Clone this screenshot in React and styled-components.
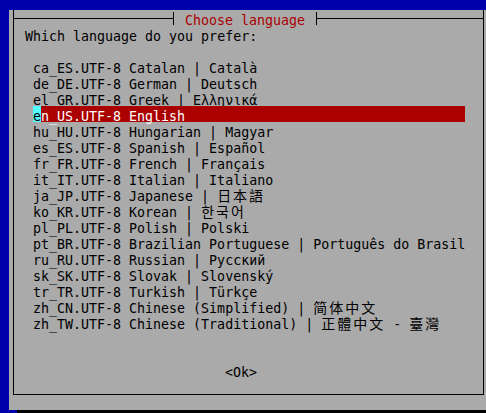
import React from "react";
import styled, { createGlobalStyle } from "styled-components";

const GlobalStyle = createGlobalStyle`
    html, body {
        margin: 0;
        padding: 0;
        background: #0000aa;
        overflow: hidden;
    }
`;

const Screen = styled.div`
    width: 486px;
    height: 413px;
    padding: 10px 0 0 9px;
    box-sizing: border-box;
    background: #0000aa;
    overflow: hidden;
    font-family: "DejaVu Sans Mono", "Liberation Mono", monospace;
    font-size: 13.3px;
    color: #000;
`;

const Dialog = styled.div`
    width: 480px;
    height: 400px;
    box-sizing: border-box;
    padding: 8px 0 0 4px;
    background: #aaaaaa;
    box-shadow: 8px 16px 0 #000;
`;

const Frame = styled.div`
    width: 471px;
    height: 385px;
    box-sizing: border-box;
    border: 1px solid #000;
    border-top: none;
`;

const TitleBar = styled.div`
    display: flex;
    align-items: flex-start;
    height: 16px;
    margin-top: -8px;
`;

const Rule = styled.div`
    height: 1px;
    margin-top: 8px;
    background: #000;
    flex: ${({ width }) => (width ? `0 0 ${width}px` : "1")};
`;

const Title = styled.div`
    height: 13px;
    margin-top: 2px;
    padding: 0 11px;
    border-left: 1px solid #000;
    border-right: 1px solid #000;
    color: #aa0000;
    line-height: 17px;
    white-space: pre;
`;

const Body = styled.div`
    padding-left: 11px;
`;

const Line = styled.div`
    height: 16px;
    box-sizing: border-box;
    padding-top: 3px;
    line-height: 16px;
    white-space: pre;
`;

const List = styled.div`
    display: flex;
    flex-direction: column;
    margin: 16px 0 0 8px;
`;

const Item = styled(Line)`
    width: 432px;
    background: ${({ selected }) => (selected ? "#aa0000" : "transparent")};
    color: ${({ selected }) => (selected ? "#ffffff" : "#000")};
`;

const Cursor = styled.span`
    background: #55ffff;
    color: #000;
    display: inline-block;
    height: 16px;
    margin-top: -3px;
    padding-top: 3px;
    box-sizing: border-box;
    vertical-align: top;
`;

const Wide = styled.span`
    font-family: "Noto Sans CJK SC", "Noto Sans CJK JP", "Noto Sans CJK KR", sans-serif;
    font-size: 14px;
    line-height: 0;
    letter-spacing: 2px;
`;

const ButtonRow = styled(Line)`
    margin-top: 32px;
    padding-left: 200px;
`;

const languages = [
    ["ca_ES.UTF-8 Catalan | Català"],
    ["de_DE.UTF-8 German | Deutsch"],
    ["el_GR.UTF-8 Greek | Ελληνικά"],
    ["en_US.UTF-8 English"],
    ["hu_HU.UTF-8 Hungarian | Magyar"],
    ["es_ES.UTF-8 Spanish | Español"],
    ["fr_FR.UTF-8 French | Français"],
    ["it_IT.UTF-8 Italian | Italiano"],
    ["ja_JP.UTF-8 Japanese | ", "日本語"],
    ["ko_KR.UTF-8 Korean | ", "한국어"],
    ["pl_PL.UTF-8 Polish | Polski"],
    ["pt_BR.UTF-8 Brazilian Portuguese | Português do Brasil"],
    ["ru_RU.UTF-8 Russian | Русский"],
    ["sk_SK.UTF-8 Slovak | Slovenský"],
    ["tr_TR.UTF-8 Turkish | Türkçe"],
    ["zh_CN.UTF-8 Chinese (Simplified) | ", "简体中文"],
    ["zh_TW.UTF-8 Chinese (Traditional) | ", "正體中文", " - ", "臺灣"],
];

const SELECTED = "en_US.UTF-8 English";

function LanguageItem({ parts }) {
    const selected = parts[0] === SELECTED;

    if (selected) {
        return (
            <Item selected>
                <Cursor>{parts[0][0]}</Cursor>
                {parts[0].slice(1)}
            </Item>
        );
    }

    return (
        <Item>
            {parts.map((part, i) =>
                i % 2 === 1 ? <Wide key={i}>{part}</Wide> : part,
            )}
        </Item>
    );
}

export default function App() {
    return (
        <>
            <GlobalStyle />
            <Screen>
                <Dialog>
                    <Frame>
                        <TitleBar>
                            <Rule width={159} />
                            <Title>Choose language</Title>
                            <Rule />
                        </TitleBar>
                        <Body>
                            <Line>Which language do you prefer:</Line>
                            <List>
                                {languages.map((parts) => (
                                    <LanguageItem key={parts[0]} parts={parts} />
                                ))}
                            </List>
                            <ButtonRow>&lt;Ok&gt;</ButtonRow>
                        </Body>
                    </Frame>
                </Dialog>
            </Screen>
        </>
    );
}
